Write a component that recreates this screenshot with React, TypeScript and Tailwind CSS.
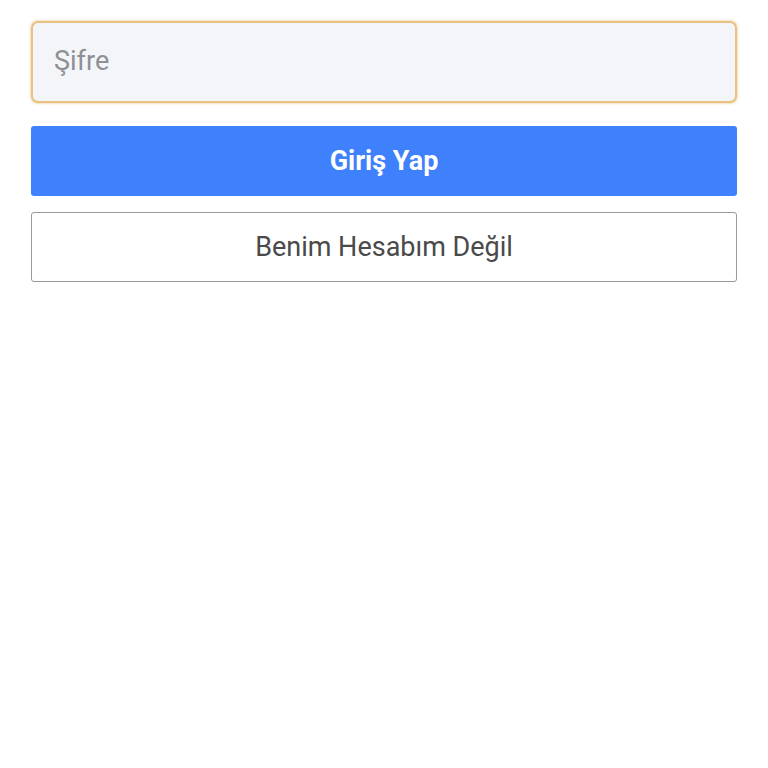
import { useState } from 'react';

const LoginForm = () => {
  const [password, setPassword] = useState("");

  return (
    <div className="min-h-screen bg-white px-[31px] pt-[21px] font-['Roboto',sans-serif]">
      <div className="flex flex-col">
        <input
          type="password"
          value={password}
          placeholder="Şifre"
          onChange={(e) => setPassword(e.target.value)}
          className="h-[82px] w-full rounded-[7px] border-2 border-[#e9c283] bg-[#f4f5f8] px-[21px] pb-[2px] text-[27px] text-[#333] placeholder:text-[#8e9096] shadow-[0_0_2px_1px_rgba(233,194,131,0.5)] outline-none"
        />
        <button className="mt-[23px] h-[70px] w-full rounded-[3px] bg-[#3f80fd] text-[27px] font-bold text-white">
          Giriş Yap
        </button>
        <button className="mt-[16px] h-[70px] w-full rounded-[3px] border-[1.5px] border-[#9a9a9a] bg-white text-[27px] text-[#4a4a4a]">
          Benim Hesabım Değil
        </button>
      </div>
    </div>
  );
};

export default LoginForm;
